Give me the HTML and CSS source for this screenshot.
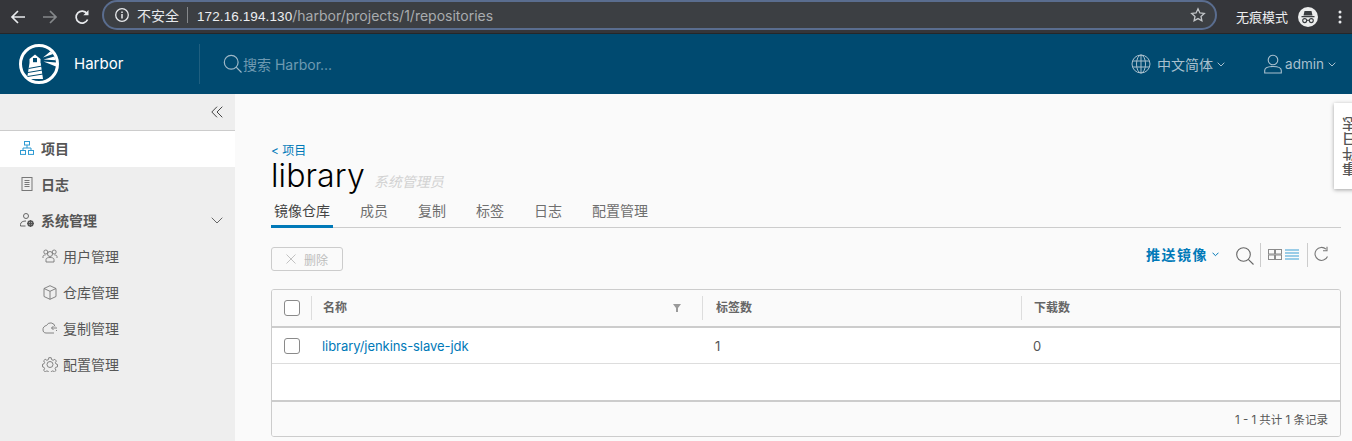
FILE: index.html
```html
<!DOCTYPE html>
<html lang="zh">
<head>
<meta charset="utf-8">
<title>Harbor</title>
<link rel="stylesheet" href="styles.css">
</head>
<body>
<div class="chrome">
  <svg class="c-ic" width="18" height="18" viewBox="0 0 18 18"><path d="M16 9H3M9 3L3 9l6 6" fill="none" stroke="#e8eaed" stroke-width="1.7"/></svg>
  <svg class="c-ic dim" width="18" height="18" viewBox="0 0 18 18"><path d="M2 9h13M9 3l6 6-6 6" fill="none" stroke="#85888b" stroke-width="1.7"/></svg>
  <svg class="c-ic rl" width="18" height="18" viewBox="0 0 18 18"><path d="M14.600 11.500A6 6 0 1 1 14 5.600" fill="none" stroke="#e8eaed" stroke-width="1.700"/><path d="M15.500 2v5.200h-5.200z" fill="#e8eaed"/></svg>
  <div class="omni">
    <svg width="16" height="16" viewBox="0 0 16 16"><circle cx="8" cy="8" r="6.300" fill="none" stroke="#e8eaed" stroke-width="1.300"/><path d="M8 7v4.400M8 4.400v1.500" stroke="#e8eaed" stroke-width="1.500"/></svg>
    <span class="insecure">不安全</span><i class="omni-sep"></i>
    <span class="url"><b>172.16.194.130</b><span class="path">/harbor/projects/1/repositories</span></span>
    <svg class="star" width="16" height="16" viewBox="0 0 16 16"><path d="M8 1.800l1.900 4.100 4.400.5-3.300 3 .9 4.400L8 11.600l-3.900 2.200.9-4.400-3.300-3 4.400-.5z" fill="none" stroke="#c4c7ca" stroke-width="1.300"/></svg>
  </div>
  <span class="incog">无痕模式</span>
  <svg class="spy" width="20" height="20" viewBox="0 0 20 20"><circle cx="10" cy="10" r="10" fill="#eceded"/><path d="M6.500 4h7l1 4.500H5.500zM3.500 9h13v1.200h-13z" fill="#3a3d40"/><g fill="none" stroke="#3a3d40" stroke-width="1.100"><circle cx="6.700" cy="13.600" r="2"/><circle cx="13.300" cy="13.600" r="2"/><path d="M8.700 13.300h2.600"/></g></svg>
  <svg class="dots" width="4" height="14" viewBox="0 0 4 14"><circle cx="2" cy="2" r="1.500" fill="#e8eaed"/><circle cx="2" cy="7" r="1.500" fill="#e8eaed"/><circle cx="2" cy="12" r="1.500" fill="#e8eaed"/></svg>
</div>

<header class="top">
  <div class="brand">
    <svg width="40" height="40" viewBox="0 0 40 40"><circle cx="20" cy="20" r="18.500" fill="none" stroke="#fff" stroke-width="3"/><path d="M10.500 15L16 10.500l5.500 4.500v4h.2l2.300 16H8l2.500-16z" fill="#fff"/><path d="M14 14h4v4.200h-4z" fill="#004a70"/><path d="M9.500 24.500l13.500-2.500M9 28.500l14.500-2.500M8.500 32.500l15.500-2.500" stroke="#004a70" stroke-width="1"/><path d="M24 13.500l7.500-6.300 2.500 2.700zM24.500 15.500l11-3 1.200 3.700zM24.500 17.500l12.700 1-.3 4z" fill="#fff"/></svg>
    <span class="brand-name">Harbor</span>
  </div>
  <div class="search">
    <svg width="20" height="20" viewBox="0 0 20 20"><circle cx="8.200" cy="8.200" r="6.900" fill="none" stroke="#9fb9c8" stroke-width="1.200"/><path d="M13.200 13.200l5.300 5.300" stroke="#9fb9c8" stroke-width="1.200"/></svg>
    <span>搜索 Harbor...</span>
  </div>
  <div class="top-right">
    <svg width="20" height="20" viewBox="0 0 20 20"><g fill="none" stroke="#a9c0ce" stroke-width="1"><circle cx="10" cy="10" r="9"/><ellipse cx="10" cy="10" rx="4.500" ry="9"/><path d="M10 1v18M1.600 7h16.800M1.600 13h16.800"/></g></svg>
    <span class="top-link lang">中文简体</span>
    <svg class="caret" width="8" height="5" viewBox="0 0 8 5"><path d="M.7.700L4 4l3.300-3.300" fill="none" stroke="#a9c0ce"/></svg>
    <svg class="user" width="18" height="20" viewBox="0 0 18 20"><g fill="none" stroke="#a9c0ce" stroke-width="1.100"><circle cx="9" cy="6" r="4.800"/><path d="M.7 19v-2.500c0-2.800 3.500-4 8.300-4s8.300 1.200 8.300 4V19z"/></g></svg>
    <span class="top-link admin">admin</span>
    <svg class="caret" width="8" height="5" viewBox="0 0 8 5"><path d="M.7.700L4 4l3.300-3.300" fill="none" stroke="#a9c0ce"/></svg>
  </div>
</header>

<div class="shell">
  <nav class="side">
    <div class="collapse"><svg width="12" height="12" viewBox="0 0 12 12"><path d="M6 .7L.8 6 6 11.300M11.300.7L6 6l5.300 5.300" fill="none" stroke="#444" stroke-width="1"/></svg></div>
    <a class="nav active">
      <svg width="14" height="14" viewBox="0 0 14 14"><g fill="none" stroke="#2f9bd3" stroke-width="1"><rect x="4.500" y=".5" width="5" height="3.500"/><rect x=".5" y="9.500" width="5" height="3.900"/><rect x="8.500" y="9.500" width="5" height="3.900"/><path d="M7 4v3M3 9.500V7h8v2.500"/></g></svg>
      <span>项目</span>
    </a>
    <a class="nav">
      <svg width="14" height="14" viewBox="0 0 14 14"><g fill="none" stroke="#777" stroke-width="1"><rect x="2" y=".5" width="10" height="13"/><path d="M4.500 3.500h5M4.500 5.500h5M4.500 7.500h5M4.500 9.500h5"/></g></svg>
      <span>日志</span>
    </a>
    <a class="nav">
      <svg width="14" height="14" viewBox="0 0 14 14"><g fill="none" stroke="#666" stroke-width="1"><circle cx="6" cy="3" r="2.500"/><path d="M.5 13v-1.500C.5 9 3 8 6 8"/><path d="M.5 13h5"/></g><circle cx="10.500" cy="10.500" r="2.300" fill="none" stroke="#555" stroke-width="1.800"/><path d="M10.500 7v7M7 10.500h7" stroke="#555" stroke-width="1"/></svg>
      <span>系统管理</span>
      <svg class="chev" width="12" height="7" viewBox="0 0 12 7"><path d="M.7.700L6 6 11.300.7" fill="none" stroke="#666" stroke-width="1"/></svg>
    </a>
    <a class="nav sub">
      <svg width="16" height="14" viewBox="0 0 16 14"><g fill="none" stroke="#777" stroke-width=".9"><circle cx="8" cy="5" r="2.500"/><circle cx="3.800" cy="3" r="2"/><circle cx="12.200" cy="3" r="2"/><path d="M4 13v-2.500C4 9 6 8.500 8 8.500s4 .5 4 2V13zM1 9V7.500C1 6.500 2 6 3.500 6M15 9V7.500C15 6.500 14 6 12.500 6"/></g></svg>
      <span>用户管理</span>
    </a>
    <a class="nav sub">
      <svg width="16" height="15" viewBox="0 0 16 15"><g fill="none" stroke="#777" stroke-width=".9"><path d="M8 .7l6 2.800v8L8 14.300l-6-2.800v-8zM2 3.500l6 2.800 6-2.800M8 6.300v8"/></g></svg>
      <span>仓库管理</span>
    </a>
    <a class="nav sub">
      <svg width="16" height="14" viewBox="0 0 16 14"><g fill="none" stroke="#777" stroke-width=".9"><path d="M13 5.500A4.500 4.500 0 0 0 4.500 4.500 4 4 0 0 0 1 9c0 1.500 1 3 3 3h8"/><path d="M15 7H9.500M11.500 5L9.500 7l2 2M15 9.500h-1"/></g></svg>
      <span>复制管理</span>
    </a>
    <a class="nav sub">
      <svg width="16" height="15" viewBox="0 0 16 15"><g fill="none" stroke="#777" stroke-width=".9"><circle cx="8" cy="7.500" r="3"/><path d="M6.800.7h2.400l.4 1.900 1.500.7 1.700-1 1.600 1.700-1 1.600.6 1.400 1.500.5v2.300l-1.800.5-.6 1.400 1 1.600-1.600 1.500-1.700-.9-1.500.6-.4 1.400H6.800l-.4-1.400-1.500-.6-1.700.9-1.600-1.500 1-1.600-.6-1.400-1.500-.5V7.300l1.500-.5.600-1.400-1-1.600L3.200 2.300l1.700 1 1.500-.7z"/></g></svg>
      <span>配置管理</span>
    </a>
  </nav>

  <main class="content">
    <a class="crumb">&lt; 项目</a>
    <div class="title-row">
      <h1>library</h1>
      <em>系统管理员</em>
    </div>
    <div class="tabs">
      <a class="tab on">镜像仓库</a>
      <a class="tab">成员</a>
      <a class="tab">复制</a>
      <a class="tab">标签</a>
      <a class="tab">日志</a>
      <a class="tab">配置管理</a>
    </div>
    <div class="toolbar">
      <button class="del" type="button">
        <svg width="10" height="10" viewBox="0 0 10 10"><path d="M.5.500l9 9M9.500.5l-9 9" stroke="#c2c2c2" stroke-width="1"/></svg>
        <span>删除</span>
      </button>
      <div class="tools">
        <a class="push">推送镜像</a>
        <svg class="push-caret" width="7" height="5" viewBox="0 0 7 5"><path d="M.5.700L3.500 3.700 6.500.7" fill="none" stroke="#0079b8"/></svg>
        <svg class="t-search" width="18" height="18" viewBox="0 0 18 18"><circle cx="7.500" cy="7.500" r="6.800" fill="none" stroke="#666" stroke-width="1.100"/><path d="M12.300 12.300l5.200 5.200" stroke="#666" stroke-width="1.100"/></svg>
        <i class="t-sep"></i>
        <svg class="t-card" width="14" height="11" viewBox="0 0 14 11"><g fill="none" stroke="#8a8a8a" stroke-width="1"><rect x=".5" y=".5" width="6" height="4.500"/><rect x="7.500" y=".5" width="6" height="4.500"/><rect x=".5" y="6" width="6" height="4.500"/><rect x="7.500" y="6" width="6" height="4.500"/></g></svg>
        <svg class="t-list" width="14" height="11" viewBox="0 0 14 11"><path d="M0 1h14M0 4h14M0 7h14M0 10h14" stroke="#3a9fd4" stroke-width="1"/></svg>
        <i class="t-sep"></i>
        <svg class="t-ref" width="16" height="16" viewBox="0 0 16 16"><path d="M13.500 10.500A6.500 6.500 0 1 1 12 3.200" fill="none" stroke="#777" stroke-width="1.100"/><path d="M13 .7v4h-4" fill="none" stroke="#777" stroke-width="1.100"/></svg>
      </div>
    </div>
    <div class="grid">
      <div class="g-row g-head">
        <div class="c-check"><i class="box"></i></div>
        <div class="c-name cell-sep">名称
          <svg width="8" height="8" viewBox="0 0 8 8"><path d="M0 0h8L5 4v4H3V4z" fill="#9a9a9a"/></svg>
        </div>
        <div class="c-tags cell-sep">标签数</div>
        <div class="c-dl cell-sep">下载数</div>
      </div>
      <div class="g-row g-body">
        <div class="c-check"><i class="box"></i></div>
        <div class="c-name"><a class="repo">library/jenkins-slave-jdk</a></div>
        <div class="c-tags">1</div>
        <div class="c-dl">0</div>
      </div>
      <div class="g-empty"></div>
      <div class="g-foot">1 - 1 共计 1 条记录</div>
    </div>
  </main>
</div>

<aside class="evt"><span>事件日志</span></aside>
</body>
</html>
```
FILE: styles.css
```css
* { box-sizing: border-box; }
html, body { margin: 0; padding: 0; height: 100%; overflow: hidden; }
body {
  width: 1352px; height: 441px; background: #fafafa; color: #565656;
  font-family: Inter, "Noto Sans CJK SC", sans-serif; font-size: 13px;
}
a { color: inherit; text-decoration: none; }

.chrome {
  height: 34px; background: #35363a; border-bottom: 1px solid #25272a;
  display: flex; align-items: center; padding: 0 0 0 9px;
}
.c-ic { margin-right: 14px; flex: none; }
.rl { margin-right: 11px; }
.omni {
  width: 1115px; height: 30px; margin-top: -3px; border: 2px solid #5a6d8f; border-radius: 15px;
  background: #3c3f43; display: flex; align-items: center; padding: 0 9px 0 10px; color: #e8eaed;
}
.insecure { margin-left: 7px; font-size: 14px; color: #e8eaed; }
.omni-sep { width: 1px; height: 16px; background: #85888b; margin: 0 9px 0 8px; }
.url { font-family: "Liberation Sans", sans-serif; font-size: 13.500px; color: #a9acaf; }
.url b { font-weight: 400; color: #eceef0; letter-spacing: .1px; }
.path { font-family: Inter, sans-serif; font-size: 14px; }
.star { margin-left: auto; }
.incog { margin-left: 19px; color: #eceef0; font-size: 13px; }
.spy { margin-left: 10px; flex: none; }
.dots { margin-left: 20px; flex: none; }

.top {
  height: 60px; background: #004a70; display: flex; align-items: center; padding-left: 19px;
}
.brand { display: flex; align-items: center; width: 181px; height: 40px; border-right: 1px solid #1f5f80; }
.brand-name { margin-left: 15px; margin-top: -2px; color: #fff; font-size: 15px; }
.search { display: flex; align-items: center; margin-left: 23px; color: #6f9ab2; font-size: 14px; }
.top-right { margin-left: auto; display: flex; align-items: center; color: #a9c0ce; padding-right: 16px; }
.top-link { font-size: 14px; }
.lang { margin-left: 6px; margin-top: -1px; }
.caret { margin-left: 4px; }
.user { margin-left: 39px; }
.admin { margin-left: 3px; font-size: 13.500px; margin-top: -1px; }

.shell { display: flex; height: 347px; }
.side { width: 235px; flex: none; background: #eee; }
.collapse {
  height: 37px; border-bottom: 1px solid #ccc; display: flex; justify-content: flex-end;
  align-items: center; padding: 0 12px 0 0;
}
.nav {
  height: 36px; display: flex; align-items: center; padding-left: 20px; padding-bottom: 2px;
  font-size: 14px; font-weight: 700; color: #565656;
}
.nav span { margin-left: 7px; }
.nav.active { background: #fff; }
.chev { margin-left: auto; margin-right: 12px; }
.nav.sub { padding-left: 42px; font-weight: 400; }
.nav.sub span { margin-left: 5px; }

.content { flex: 1; padding: 50px 11px 0 36px; min-width: 0; }
.crumb { display: block; height: 14px; font-size: 12px; line-height: 14px; color: #0079b8; }
.title-row { display: flex; align-items: baseline; height: 34px; margin-top: 1px; }
h1 { margin: 0; font-size: 32px; line-height: 34px; font-weight: 300; color: #000; letter-spacing: .1px; }
.title-row em { margin-left: 9px; color: #d2d2d2; font-size: 14px; font-style: italic; }
.tabs { display: flex; height: 33px; margin-top: 2px; border-bottom: 1px solid #ccc; gap: 30px; padding-left: 3px; }
.tab { height: 33px; line-height: 32px; font-size: 14px; color: #6f6f6f; }
.tab.on { color: #444; margin-left: -3px; width: 62px; padding-left: 3px; margin-right: -3px; border-bottom: 3px solid #0079b8; }

.toolbar { display: flex; justify-content: space-between; height: 42px; margin-top: 19px; }
.del {
  width: 72px; height: 24px; border: 1px solid #ccc; border-radius: 3px; background: transparent;
  display: flex; align-items: center; justify-content: center; gap: 8px; padding: 0;
  color: #bdbdbd; font: 400 12px Inter, "Noto Sans CJK SC", sans-serif;
}
.tools { display: flex; align-items: flex-start; height: 24px; }
.tools > * { flex: none; }
.push { font-weight: 700; font-size: 14px; letter-spacing: 1.500px; color: #0079b8; line-height: 15px; }
.push-caret { margin: 5px 0 0 4px; }
.t-search { margin: 0 0 0 17px; }
.t-sep { width: 1px; height: 24px; background: #ccc; margin: -4px 0 0 6px; }
.t-card { margin: 2px 0 0 7px; }
.t-list { margin: 2px 0 0 3px; }
.t-list + .t-sep { margin-left: 8px; }
.t-ref { margin: -1px 11px 0 6px; }

.grid { height: 148px; border: 1px solid #ccc; border-radius: 3px; overflow: hidden; background: #fff; }
.g-row { display: flex; align-items: center; }
.g-head { height: 38px; background: #fafafa; border-bottom: 2px solid #ccc; font-weight: 700; font-size: 12px; color: #666; }
.g-body { height: 36px; border-bottom: 1px solid #ddd; font-size: 13px; }
.c-check { width: 39px; flex: none; display: flex; padding-left: 12px; }
.box { width: 16px; height: 16px; border: 1px solid #8a8a8a; border-radius: 3px; background: #fff; display: block; }
.c-name { width: 391px; flex: none; padding-left: 11px; display: flex; align-items: center; justify-content: space-between; padding-right: 21px; }
.c-tags { width: 319px; flex: none; padding-left: 13px; }
.c-dl { flex: 1; padding-left: 12px; }
.cell-sep { height: 24px; border-left: 1px solid #ddd; line-height: 24px; }
.repo { color: #0079b8; letter-spacing: -.06px; }
.g-empty { height: 36px; }
.g-foot {
  height: 36px; background: #fafafa; border-top: 2px solid #ccc; font-size: 11.500px; color: #565656;
  display: flex; align-items: center; justify-content: flex-end; padding-right: 12px;
}

.evt {
  position: absolute; left: 1334px; top: 103px; width: 30px; height: 86px; background: #fff;
  box-shadow: 0 1px 4px rgba(0,0,0,.35); display: flex; align-items: center; padding-left: 6px;
}
.evt span { writing-mode: vertical-rl; transform: rotate(180deg); font-size: 14px; font-weight: 500; color: #565656; letter-spacing: 1px; }
```
